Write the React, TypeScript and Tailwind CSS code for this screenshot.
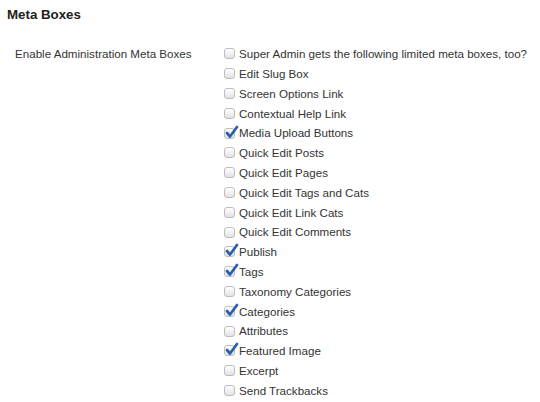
import React from "react";

const items: [string, boolean][] = [
  ["Super Admin gets the following limited meta boxes, too?", false],
  ["Edit Slug Box", false],
  ["Screen Options Link", false],
  ["Contextual Help Link", false],
  ["Media Upload Buttons", true],
  ["Quick Edit Posts", false],
  ["Quick Edit Pages", false],
  ["Quick Edit Tags and Cats", false],
  ["Quick Edit Link Cats", false],
  ["Quick Edit Comments", false],
  ["Publish", true],
  ["Tags", true],
  ["Taxonomy Categories", false],
  ["Categories", true],
  ["Attributes", false],
  ["Featured Image", true],
  ["Excerpt", false],
  ["Send Trackbacks", false],
];

function Box({ checked }: { checked: boolean }) {
  return (
    <span className="relative mr-[4px] inline-block h-[11px] w-[11px] shrink-0 rounded-[3px] border border-[#bdbdbd] bg-gradient-to-b from-[#ffffff] to-[#e2e2e2]">
      {checked && (
        <svg className="absolute left-[0px] top-[-4px]" width="14" height="14" viewBox="0 0 14 14">
          <path d="M2 8 L5 11.5 L12 2" fill="none" stroke="#2b5fae" strokeWidth="2.7" strokeLinecap="round" strokeLinejoin="round" />
        </svg>
      )}
    </span>
  );
}

export default function App() {
  return (
    <div className="h-[402px] w-[540px] overflow-hidden bg-white text-[#333] font-['Liberation_Sans',Arial,sans-serif]">
      <h2 className="pl-[7px] pt-[7px] text-[13.3px] font-bold leading-[16px] text-[#222]">Meta Boxes</h2>
      <div className="mt-[21px] flex">
        <div className="w-[224px] shrink-0 pl-[15px] text-[11.6px] leading-[19.8px]">Enable Administration Meta Boxes</div>
        <div className="flex flex-col">
          {items.map(([label, checked]) => (
            <label key={label} className="flex h-[19.8px] items-center text-[11.6px]">
              <Box checked={checked} />
              <span>{label}</span>
            </label>
          ))}
        </div>
      </div>
    </div>
  );
}
